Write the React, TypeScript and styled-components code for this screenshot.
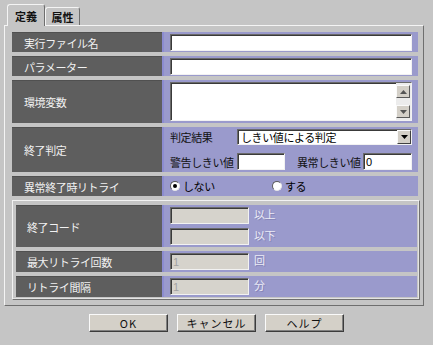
import React from 'react';
import styled, { createGlobalStyle } from 'styled-components';

const GlobalStyle = createGlobalStyle`
  html, body {
    margin: 0;
    padding: 0;
    background: #c5c5c5;
  }
  body {
    font-family: "Noto Sans CJK JP", "DejaVu Sans", sans-serif;
    font-size: 11px;
    letter-spacing: -0.4px;
  }
`;

const Window = styled.div`
  width: 433px;
  height: 345px;
  box-sizing: border-box;
  background: #c5c5c5;
  display: flex;
  flex-direction: column;
`;

const TabBar = styled.div`
  display: flex;
  align-items: flex-end;
  height: 25px;
  padding-left: 7px;
`;

const Tab = styled.div<{ $active?: boolean }>`
  box-sizing: border-box;
  width: ${p => (p.$active ? 38 : 35)}px;
  height: ${p => (p.$active ? 22 : 18)}px;
  margin-bottom: ${p => (p.$active ? -1 : 0)}px;
  position: relative;
  z-index: ${p => (p.$active ? 1 : 0)};
  background: #c5c5c5;
  border: 1px solid;
  border-bottom: none;
  border-color: #f4f4f4 #6e6e6e #6e6e6e #f4f4f4;
  border-radius: 3px 3px 0 0;
  display: flex;
  align-items: center;
  justify-content: center;
  font-weight: bold;
  font-size: 11px;
  letter-spacing: 0;
  color: #111;
`;

const Panel = styled.div`
  margin: 0 9px 0 4px;
  border: 1px solid;
  border-color: #f4f4f4 #6e6e6e #6e6e6e #f4f4f4;
  padding: 6px 3px 5px 7px;
  display: flex;
  flex-direction: column;
  gap: 4px;
`;

const Row = styled.div<{ $h: number; $labelW?: number; $inset?: number }>`
  display: grid;
  grid-template-columns: ${p => p.$labelW ?? 150}px 1fr;
  height: ${p => p.$h}px;
  margin-right: ${p => p.$inset ?? 2}px;
`;

const Label = styled.div<{ $pad?: number }>`
  background: #5e5e5e;
  color: #f2f2f2;
  display: flex;
  align-items: center;
  padding-left: ${p => p.$pad ?? 12}px;
  border-top: 1px solid #505050;
  white-space: nowrap;
`;

const Value = styled.div<{ $column?: boolean; $gap?: number }>`
  background: #9a9acc;
  border-left: 2px solid #8c8cd0;
  padding: 0 6px 0 6px;
  display: flex;
  flex-direction: ${p => (p.$column ? 'column' : 'row')};
  justify-content: center;
  align-items: ${p => (p.$column ? 'stretch' : 'center')};
  gap: ${p => p.$gap ?? 0}px;
  color: #111;
  white-space: nowrap;
`;

const Field = styled.input<{ $w?: number }>`
  box-sizing: border-box;
  width: ${p => (p.$w ? `${p.$w}px` : '100%')};
  height: 17px;
  margin: 0;
  padding: 0 2px;
  background: #fff;
  border: 1px solid;
  border-color: #6a6a6a #f2f2f2 #f2f2f2 #6a6a6a;
  box-shadow: inset 1px 1px 0 #3a3a3a;
  font-family: "Liberation Sans", "Noto Sans CJK JP", sans-serif;
  font-size: 11px;
  color: #000;
  outline: none;

  &:disabled {
    background: #d6d3cc;
    color: #a2a2a2;
  }
`;

const Area = styled.div`
  box-sizing: border-box;
  width: 100%;
  height: 39px;
  background: #fff;
  border: 1px solid;
  border-color: #6a6a6a #f2f2f2 #f2f2f2 #6a6a6a;
  box-shadow: inset 1px 1px 0 #3a3a3a;
  display: flex;
  justify-content: flex-end;
`;

const ScrollBar = styled.div`
  width: 15px;
  display: flex;
  flex-direction: column;
  justify-content: space-between;
  padding: 2px 0 2px;
  background: #ececec;
`;

const ArrowButton = styled.div`
  box-sizing: border-box;
  width: 14px;
  height: 13px;
  background: #d4d0c8;
  border: 1px solid;
  border-color: #fafafa #5a5a5a #5a5a5a #fafafa;
  display: flex;
  align-items: center;
  justify-content: center;
`;

const Select = styled.div`
  flex: 1;
  box-sizing: border-box;
  height: 16px;
  background: #fff;
  border: 1px solid;
  border-color: #6a6a6a #f2f2f2 #f2f2f2 #6a6a6a;
  box-shadow: inset 1px 1px 0 #3a3a3a;
  display: flex;
  align-items: center;
  padding-left: 3px;
  color: #000;
`;

const SelectText = styled.span`
  flex: 1;
`;

const SelectButton = styled.div`
  box-sizing: border-box;
  width: 14px;
  height: 14px;
  background: #d4d0c8;
  border: 1px solid;
  border-color: #fafafa #404040 #404040 #fafafa;
  display: flex;
  align-items: center;
  justify-content: center;
`;

const Line = styled.div<{ $cols: string }>`
  display: grid;
  grid-template-columns: ${p => p.$cols};
  align-items: center;
`;

const Caption = styled.span<{ $pad?: number }>`
  padding-left: ${p => p.$pad ?? 0}px;
`;

const RadioGroup = styled.div`
  display: grid;
  grid-template-columns: 102px auto;
  align-items: center;
  width: 100%;
`;

const RadioOption = styled.label`
  display: flex;
  align-items: center;
  gap: 3px;
  color: #000;
`;

const RadioDot = styled.span<{ $on?: boolean }>`
  box-sizing: border-box;
  flex: 0 0 10px;
  width: 10px;
  height: 10px;
  border-radius: 50%;
  background: #fff;
  border: 1px solid;
  border-color: #5a5a5a #e8e8e8 #e8e8e8 #5a5a5a;
  display: flex;
  align-items: center;
  justify-content: center;

  &::after {
    content: '';
    width: 4px;
    height: 4px;
    border-radius: 50%;
    background: ${p => (p.$on ? '#000' : 'transparent')};
  }
`;

const Group = styled.div`
  box-sizing: border-box;
  height: 100px;
  border: 1px solid;
  border-color: #f2f2f2 #707070 #707070 #f2f2f2;
  box-shadow: inset -1px -1px 0 #e4e4e4;
  padding: 4px 2px 2px 3px;
  display: flex;
  flex-direction: column;
  gap: 4px;
`;

const InputLine = styled.div`
  display: flex;
  align-items: center;
  gap: 5px;
  height: 17px;
`;

const Unit = styled.span`
  color: #ebebf6;
  text-shadow: 1px 1px 0 #8585b8;
  line-height: 13px;
  margin-top: -2px;
`;

const ButtonBar = styled.div`
  margin-top: 8px;
  display: flex;
  justify-content: center;
  gap: 9px;
`;

const Button = styled.button`
  box-sizing: border-box;
  width: 79px;
  height: 18px;
  padding: 0;
  background: #d4d0c8;
  border: 1px solid;
  border-color: #fafafa #3c3c3c #3c3c3c #fafafa;
  box-shadow: inset -1px -1px 0 #808080;
  font-family: "Noto Sans CJK JP", "DejaVu Sans", sans-serif;
  font-size: 11px;
  letter-spacing: 1px;
  color: #111;
`;

const Tri = ({ up }: { up?: boolean }) => (
  <svg width="7" height="4" viewBox="0 0 7 4">
    <path d={up ? 'M0 4 L3.5 0 L7 4 Z' : 'M0 0 L7 0 L3.5 4 Z'} fill="#555" />
  </svg>
);

export default function App() {
  return (
    <Window>
      <GlobalStyle />
      <TabBar>
        <Tab $active>定義</Tab>
        <Tab>属性</Tab>
      </TabBar>
      <Panel>
        <Row $h={20}>
          <Label>実行ファイル名</Label>
          <Value><Field readOnly value="" /></Value>
        </Row>
        <Row $h={20}>
          <Label>パラメーター</Label>
          <Value><Field readOnly value="" /></Value>
        </Row>
        <Row $h={43}>
          <Label>環境変数</Label>
          <Value>
            <Area>
              <ScrollBar>
                <ArrowButton><Tri up /></ArrowButton>
                <ArrowButton><Tri /></ArrowButton>
              </ScrollBar>
            </Area>
          </Value>
        </Row>
        <Row $h={45}>
          <Label>終了判定</Label>
          <Value $column $gap={8}>
            <Line $cols="67px 1fr">
              <Caption>判定結果</Caption>
              <Select>
                <SelectText>しきい値による判定</SelectText>
                <SelectButton>
                  <svg width="7" height="4" viewBox="0 0 7 4">
                    <path d="M0 0 L7 0 L3.5 4 Z" fill="#000" />
                  </svg>
                </SelectButton>
              </Select>
            </Line>
            <Line $cols="67px 48px 1fr 49px">
              <Caption>警告しきい値</Caption>
              <Field readOnly value="" />
              <Caption $pad={12}>異常しきい値</Caption>
              <Field readOnly value="0" />
            </Line>
          </Value>
        </Row>
        <Row $h={20}>
          <Label>異常終了時リトライ</Label>
          <Value>
            <RadioGroup>
              <RadioOption><RadioDot $on />しない</RadioOption>
              <RadioOption><RadioDot />する</RadioOption>
            </RadioGroup>
          </Value>
        </Row>
        <Group>
          <Row $h={42} $labelW={146} $inset={0}>
            <Label $pad={11}>終了コード</Label>
            <Value $column $gap={4}>
              <InputLine><Field $w={79} disabled value="" /><Unit>以上</Unit></InputLine>
              <InputLine><Field $w={79} disabled value="" /><Unit>以下</Unit></InputLine>
            </Value>
          </Row>
          <Row $h={21} $labelW={146} $inset={0}>
            <Label $pad={11}>最大リトライ回数</Label>
            <Value $column>
              <InputLine><Field $w={79} disabled value="1" /><Unit>回</Unit></InputLine>
            </Value>
          </Row>
          <Row $h={21} $labelW={146} $inset={0}>
            <Label $pad={11}>リトライ間隔</Label>
            <Value $column>
              <InputLine><Field $w={79} disabled value="1" /><Unit>分</Unit></InputLine>
            </Value>
          </Row>
        </Group>
      </Panel>
      <ButtonBar>
        <Button>OK</Button>
        <Button>キャンセル</Button>
        <Button>ヘルプ</Button>
      </ButtonBar>
    </Window>
  );
}
